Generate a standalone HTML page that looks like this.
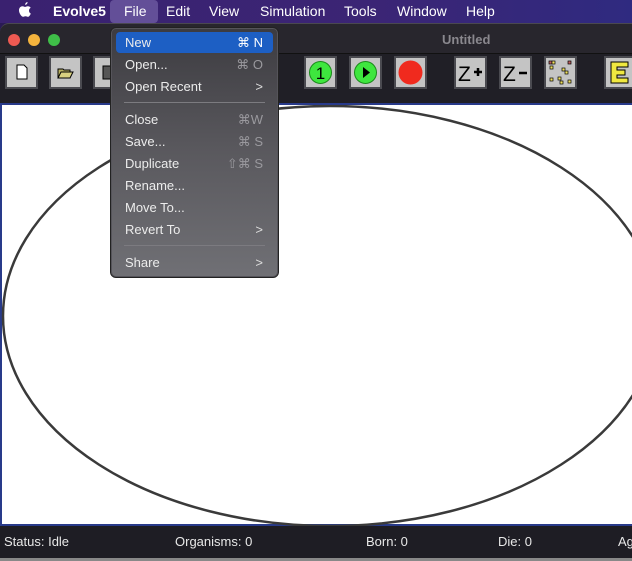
<!DOCTYPE html>
<html><head><meta charset="utf-8"><style>
*{margin:0;padding:0;box-sizing:border-box}
body{width:632px;height:560px;overflow:hidden;background:#2a1a55;font-family:"Liberation Sans",sans-serif;position:relative}
.mb{position:absolute;left:0;top:0;width:632px;height:23px;background:linear-gradient(90deg,#3a2170,#3b2575 60%,#2f2a80);color:#fff;font-size:14px}
.mb span{position:absolute;top:3px}
.win{position:absolute;left:0;top:23px;width:632px;height:537px;background:#28262d;border-radius:9px 0 0 0;border-top:1px solid #4a4850}
.tl{position:absolute;top:10px;width:12px;height:12px;border-radius:50%}
.title{position:absolute;top:8px;left:442px;color:#8a888e;font-size:13px;font-weight:bold}
.tb{position:absolute;left:0;top:29px;width:632px;height:50px;background:#201f26;border-top:1px solid #111}
.btn{position:absolute;top:32px;width:33px;height:33px;background:#c4c4c4;border:2px solid #4a4a50}
.canvas{position:absolute;left:0;top:79px;width:632px;height:423px;background:#fff;border:2px solid #283a8a;border-right:none}
.status{position:absolute;left:0;top:502px;width:632px;height:33px;background:#1e1d24;color:#e8e8e8;font-size:13px}
.status span{position:absolute;top:8px}
.bot{position:absolute;left:0;top:534px;width:632px;height:3px;background:#888}
.menu{position:absolute;left:110px;top:27px;width:169px;height:251px;border-radius:6px;background:linear-gradient(180deg,#3c3b40,#5a595e 50%,#707075);border:1px solid #222;box-shadow:0 0 0 1px #55545a inset;color:#ececec;font-size:13px}
.mi{position:absolute;left:14px;width:150px}
.mi .k{position:absolute;right:12px;color:#9a999e}
.sep{position:absolute;left:13px;width:141px;height:1px;background:#7c7b80}
.hl{position:absolute;left:5px;top:4px;width:157px;height:21px;background:#1d5fc4;border-radius:4px}
</style></head><body>
<div class="mb">
<span style="left:18px;top:2px;font-size:15px"><svg width="14" height="16" viewBox="0 0 14 16"><path d="M9.5 0c.2 1.3-.9 2.8-2.3 2.9C7 1.6 8.2.2 9.5 0zM12.8 11.5c-.5 1.3-1.6 3.3-2.8 3.3-1 0-1.3-.6-2.5-.6s-1.5.6-2.5.6C3.7 14.8 1 11.6 1 8.3 1 5.6 2.8 4.2 4.5 4.2c1.1 0 1.9.7 2.6.7.6 0 1.6-.8 2.8-.7 1.1 0 2.2.6 2.8 1.5-2.5 1.4-2 5 .1 5.8z" fill="#fff"/></svg></span>
<span style="left:53px;font-weight:bold">Evolve5</span>
<span style="left:110px;top:0;width:48px;height:23px;background:#634f98;border-radius:4px"></span>
<span style="left:124px">File</span>
<span style="left:166px">Edit</span>
<span style="left:209px">View</span>
<span style="left:260px">Simulation</span>
<span style="left:344px">Tools</span>
<span style="left:397px">Window</span>
<span style="left:466px">Help</span>
</div>
<div class="win">
<div class="tl" style="left:8px;background:#ee5a52"></div>
<div class="tl" style="left:28px;background:#f4b33d"></div>
<div class="tl" style="left:48px;background:#3fbe48"></div>
<div class="title">Untitled</div>
<div class="tb"></div>
<div class="btn" style="left:5px"><svg width="29" height="29"><path d="M10 7h7l3 3v11H10z" fill="#fff" stroke="#000"/></svg></div>
<div class="btn" style="left:49px"><svg width="29" height="29"><path d="M7 11h5l1 1h6v8H7z" fill="#b8b060" stroke="#000"/><path d="M7 20l3-6h12l-3 6z" fill="#d8d080" stroke="#000"/></svg></div>
<div class="btn" style="left:93px"><svg width="29" height="29"><rect x="8" y="8" width="12" height="13" fill="#555" stroke="#000"/></svg></div>
<div class="btn" style="left:304px"><svg width="29" height="29"><circle cx="14.5" cy="14.5" r="11" fill="#3ee63e" stroke="#1a8a1a"/><text x="14.5" y="21" font-size="17" text-anchor="middle" font-family="Liberation Sans">1</text></svg></div>
<div class="btn" style="left:349px"><svg width="29" height="29"><circle cx="14.5" cy="14.5" r="11" fill="#3ee63e" stroke="#1a8a1a"/><path d="M12 9l7 5.5-7 5.5z"/></svg></div>
<div class="btn" style="left:394px"><svg width="29" height="29"><circle cx="14.5" cy="14.5" r="12" fill="#f02a1e"/></svg></div>
<div class="btn" style="left:454px"><svg width="29" height="29"><text x="2" y="23" font-size="21" font-family="Liberation Sans">Z</text><path d="M18 14h8M22 10v8" stroke="#000" stroke-width="2.5"/></svg></div>
<div class="btn" style="left:499px"><svg width="29" height="29"><text x="2" y="23" font-size="21" font-family="Liberation Sans">Z</text><path d="M18 15h8" stroke="#000" stroke-width="2.5"/></svg></div>
<div class="btn" style="left:544px"><svg width="29" height="29"><g fill="#f0e060" stroke="#000" stroke-width=".7"><rect x="3" y="3" width="3" height="3" fill="#c06060"/><rect x="6" y="3" width="3" height="3"/><rect x="22" y="3" width="3" height="3" fill="#c06060"/><rect x="4" y="8" width="3" height="3"/><rect x="16" y="10" width="3" height="3"/><rect x="19" y="13" width="3" height="3"/><rect x="4" y="20" width="3" height="3"/><rect x="12" y="19" width="3" height="3"/><rect x="14" y="23" width="3" height="3"/><rect x="22" y="22" width="3" height="3"/></g></svg></div>
<div class="btn" style="left:604px"><svg width="29" height="29"><path d="M5 4h17v5H11v3h8v5h-8v3h11v5H5z" fill="#f0e840" stroke="#000"/></svg></div>
<div class="canvas"><svg width="632" height="421" style="position:absolute;left:-2px;top:0"><ellipse cx="330" cy="211" rx="327" ry="210" fill="none" stroke="#3a3a3a" stroke-width="2.5"/></svg></div>
<div class="status"><span style="left:4px">Status: Idle</span><span style="left:175px">Organisms: 0</span><span style="left:366px">Born: 0</span><span style="left:498px">Die: 0</span><span style="left:618px">Ag</span></div>
<div class="bot"></div>
</div>
<div class="menu">
<div class="hl"></div>
<div class="mi" style="top:7px">New<span class="k" style="color:#fff">⌘ N</span></div>
<div class="mi" style="top:29px">Open...<span class="k">⌘ O</span></div>
<div class="mi" style="top:51px">Open Recent<span class="k" style="color:#ddd">&gt;</span></div>
<div class="sep" style="top:74px"></div>
<div class="mi" style="top:84px">Close<span class="k">⌘W</span></div>
<div class="mi" style="top:106px">Save...<span class="k">⌘ S</span></div>
<div class="mi" style="top:128px">Duplicate<span class="k">⇧⌘ S</span></div>
<div class="mi" style="top:150px">Rename...</div>
<div class="mi" style="top:172px">Move To...</div>
<div class="mi" style="top:194px">Revert To<span class="k" style="color:#ddd">&gt;</span></div>
<div class="sep" style="top:217px"></div>
<div class="mi" style="top:227px">Share<span class="k" style="color:#ddd">&gt;</span></div>
</div>
</body></html>
